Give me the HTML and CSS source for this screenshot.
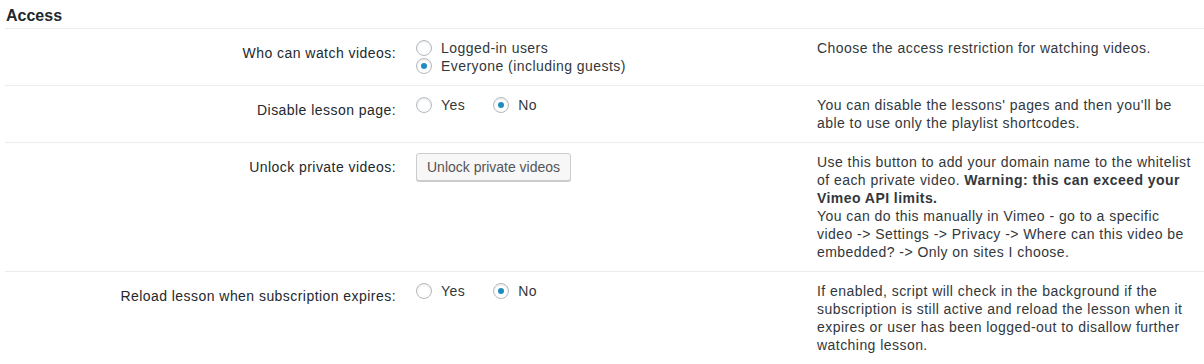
FILE: index.html
```html
<!DOCTYPE html>
<html lang="en">
  <head>
    <meta charset="UTF-8" />
    <meta name="viewport" content="width=device-width, initial-scale=1.0" />
    <title>Access settings</title>
    <link rel="stylesheet" href="styles.css">
  </head>
  <body>
    <div class="settings">
      <h2 class="section-title">Access</h2>

      <div class="row">
        <div class="label">Who can watch videos:</div>
        <div class="field">
          <label class="choice"><input type="radio" name="watch" />Logged-in users</label>
          <label class="choice"><input type="radio" name="watch" checked />Everyone (including guests)</label>
        </div>
        <p class="desc">Choose the access restriction for watching videos.</p>
      </div>

      <div class="row">
        <div class="label">Disable lesson page:</div>
        <div class="field inline">
          <label class="choice"><input type="radio" name="lesson" />Yes</label>
          <label class="choice"><input type="radio" name="lesson" checked />No</label>
        </div>
        <p class="desc">You can disable the lessons' pages and then you'll be able to use only the playlist shortcodes.</p>
      </div>

      <div class="row">
        <div class="label">Unlock private videos:</div>
        <div class="field">
          <button class="button" type="button">Unlock private videos</button>
        </div>
        <p class="desc">Use this button to add your domain name to the whitelist of each private video. <b>Warning: this can exceed your Vimeo API limits.</b><br />You can do this manually in Vimeo - go to a specific video -&gt; Settings -&gt; Privacy -&gt; Where can this video be embedded? -&gt; Only on sites I choose.</p>
      </div>

      <div class="row">
        <div class="label">Reload lesson when subscription expires:</div>
        <div class="field inline">
          <label class="choice"><input type="radio" name="reload" />Yes</label>
          <label class="choice"><input type="radio" name="reload" checked />No</label>
        </div>
        <p class="desc">If enabled, script will check in the background if the subscription is still active and reload the lesson when it expires or user has been logged-out to disallow further watching lesson.</p>
      </div>
    </div>
  </body>
</html>
```

FILE: styles.css
```css
* {
  margin: 0;
  padding: 0;
  box-sizing: border-box;
}
body {
  background: #fff;
  color: #32373c;
  font-family: "Liberation Sans", Arial, sans-serif;
  font-size: 14px;
  letter-spacing: 0.45px;
  line-height: 18px;
}
.settings {
  margin-left: 5px;
}
.section-title {
  font-size: 16px;
  font-weight: 700;
  line-height: 18px;
  letter-spacing: 0;
  color: #23282d;
  padding: 7px 0 3px 1px;
  border-bottom: 1px solid #ececec;
}
.row {
  display: grid;
  grid-template-columns: 391px 381px 1fr;
  column-gap: 20px;
  border-bottom: 1px solid #ececec;
}
.label {
  text-align: right;
  padding-top: 15px;
  color: #23282d;
}
.field {
  padding: 10px 0;
}
.field.inline {
  display: flex;
  align-items: flex-start;
  column-gap: 28px;
}
.desc {
  padding: 10px 10px 10px 0;
}
.choice {
  display: flex;
  align-items: center;
  height: 18px;
}
input[type="radio"] {
  appearance: none;
  -webkit-appearance: none;
  flex: none;
  width: 16px;
  height: 16px;
  margin-right: 9px;
  border: 1px solid #b4b9be;
  border-radius: 50%;
  background: #fff;
  box-shadow: inset 0 1px 2px rgba(0, 0, 0, 0.1);
  display: flex;
  align-items: center;
  justify-content: center;
}
input[type="radio"]:checked::before {
  content: "";
  width: 6px;
  height: 6px;
  border-radius: 50%;
  background: #1e8cbe;
}
.button {
  height: 28px;
  padding: 0 10px 1px;
  font-family: inherit;
  font-size: 14px;
  letter-spacing: 0;
  color: #555;
  background: #f7f7f7;
  border: 1px solid #ccc;
  border-radius: 3px;
  box-shadow: 0 1px 0 #ccc;
}
```
